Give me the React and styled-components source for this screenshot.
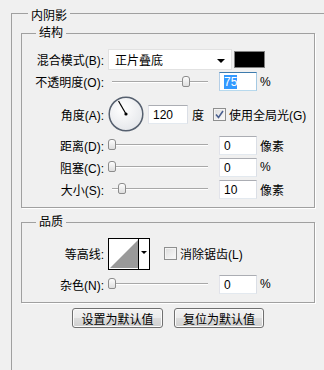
import styled, { createGlobalStyle } from 'styled-components';

const GlobalStyle = createGlobalStyle`
  body {
    margin: 0;
    background: #f0f0f0;
    font-family: "Liberation Sans", "Noto Sans CJK SC", sans-serif;
    font-size: 12px;
    color: #000;
  }
`;

const Page = styled.div`
  height: 370px;
  overflow: hidden;
  box-sizing: border-box;
  padding: 3px 0 0 11px;
`;

const Group = styled.fieldset`
  margin: 0;
  min-width: 0;
  box-sizing: border-box;
  border: 1px solid #a0a0a0;
  box-shadow: 1px 1px 0 #ffffff;
`;

const OuterGroup = styled(Group)`
  border-right: none;
  border-bottom: none;
  box-shadow: none;
  height: 400px;
  padding: 3px 0 0 9px;
`;

const InnerGroup = styled(Group)`
  width: 294px;
  padding: ${(p) => p.$top || 8}px 0 7px 0;
  margin-top: ${(p) => p.$mt || 0}px;
`;

const Legend = styled.legend`
  padding: ${(p) => (p.$drop ? '6px 3px 0' : '0 3px')};
  margin-left: ${(p) => p.$ml}px;
  line-height: 14px;
`;

const Row = styled.div`
  display: flex;
  align-items: center;
  height: ${(p) => p.$h || 22}px;
  margin-top: ${(p) => p.$mt || 0}px;
`;

const Label = styled.span`
  flex-shrink: 0;
  width: 82px;
  margin-right: 4px;
  text-align: right;
  white-space: nowrap;
`;

const Select = styled.div`
  display: flex;
  align-items: center;
  justify-content: space-between;
  box-sizing: border-box;
  width: 124px;
  height: 21px;
  padding: 0 6px 0 6px;
  background: #ffffff;
  border: 1px solid #e2e2e2;
  &::after {
    content: '';
    border-left: 4px solid transparent;
    border-right: 4px solid transparent;
    border-top: 4px solid #000;
    margin-top: 2px;
  }
`;

const Swatch = styled.div`
  width: 31px;
  height: 17px;
  margin-left: 2px;
  box-sizing: border-box;
  background: #000;
  border: 1px solid #808080;
`;

const Slider = styled.div`
  position: relative;
  flex-shrink: 0;
  width: 104px;
  height: 14px;
  margin-right: 7px;
  &::before {
    content: '';
    position: absolute;
    left: 4px;
    right: 4px;
    top: 6px;
    height: 1px;
    background: #a8a8a8;
    border-bottom: 1px solid #ffffff;
  }
`;

const Thumb = styled.div`
  position: absolute;
  top: 1px;
  width: 8px;
  height: 11px;
  margin-left: -4px;
  box-sizing: border-box;
  border: 1px solid #8c8c8c;
  border-radius: 3px 3px 2px 2px;
  background: linear-gradient(#fdfdfd, #dedede);
`;

const Field = styled.div`
  flex-shrink: 0;
  box-sizing: border-box;
  width: ${(p) => p.$w || 38}px;
  height: 19px;
  margin-left: ${(p) => p.$ml || 0}px;
  padding: 1px 4px 0;
  line-height: 16px;
  background: #ffffff;
  border: 1px solid;
  border-color: ${(p) =>
    p.$focus ? '#3d7bad #a4c9e3 #b7d9ed #b5cfe7' : '#abadb3 #dbdfe6 #e3e9ef #e2e3ea'};
`;

const Selected = styled.span`
  background: #3399ff;
  color: #ffffff;
`;

const Unit = styled.span`
  margin-left: ${(p) => p.$ml || 3}px;
  white-space: nowrap;
`;

const Check = styled.label`
  display: flex;
  align-items: center;
  gap: 3px;
  margin-left: ${(p) => p.$ml}px;
  white-space: nowrap;
`;

const CheckBox = styled.span`
  display: flex;
  align-items: center;
  justify-content: center;
  width: 13px;
  height: 13px;
  box-sizing: border-box;
  border: 1px solid #8e8f8f;
  background: linear-gradient(135deg, #dcdcdc, #fbfbfb);
  box-shadow: inset 0 0 0 1px #f4f4f4;
`;

const Buttons = styled.div`
  display: flex;
  justify-content: center;
  gap: 11px;
  width: 294px;
  margin-top: 5px;
`;

const Button = styled.button`
  box-sizing: border-box;
  width: ${(p) => p.$w}px;
  height: 20px;
  padding: 0;
  font: inherit;
  color: #000;
  border: 1px solid #707070;
  border-radius: 3px;
  background: linear-gradient(#f2f2f2 0%, #ebebeb 50%, #dddddd 51%, #cfcfcf 100%);
  box-shadow: inset 0 0 0 1px #fbfbfb;
`;

function Range({ pos }) {
  return (
    <Slider>
      <Thumb style={{ left: 4 + pos * 96 }} />
    </Slider>
  );
}

function Dial({ angle }) {
  const r = (angle * Math.PI) / 180;
  const x = 18 + Math.cos(r) * 15;
  const y = 18 - Math.sin(r) * 15;
  return (
    <svg width="36" height="36" viewBox="0 0 36 36">
      <defs>
        <radialGradient id="dialFill" cx="0.4" cy="0.35" r="0.7">
          <stop offset="0" stopColor="#ffffff" />
          <stop offset="1" stopColor="#e4e6ea" />
        </radialGradient>
      </defs>
      <circle cx="18" cy="18" r="16.8" fill="url(#dialFill)" stroke="#56606f" strokeWidth="1.5" />
      <line x1="18" y1="18" x2={x} y2={y} stroke="#000" strokeWidth="1.2" />
      <circle cx="18" cy="18" r="1.6" fill="#000" />
    </svg>
  );
}

function Contour() {
  return (
    <svg width="42" height="32" viewBox="0 0 42 32">
      <rect x="0.5" y="0.5" width="41" height="31" fill="#fff" stroke="#000" />
      <polygon points="2,30 30,2 30,30" fill="#9a9a9a" />
      <line x1="30.5" y1="1" x2="30.5" y2="31" stroke="#000" />
      <polygon points="33,13 39,13 36,16" fill="#000" />
    </svg>
  );
}

function Tick({ checked }) {
  return (
    <CheckBox>
      {checked && (
        <svg width="9" height="9" viewBox="0 0 9 9">
          <path d="M1 4.5 L3.5 7.5 L8 1" fill="none" stroke="#4a5f8f" strokeWidth="1.6" />
        </svg>
      )}
    </CheckBox>
  );
}

export default function App() {
  return (
    <>
      <GlobalStyle />
      <Page>
        <OuterGroup>
          <Legend $drop $ml={7}>内阴影</Legend>
          <InnerGroup>
            <Legend $ml={14}>结构</Legend>
            <Row $h={23}>
              <Label>混合模式(B):</Label>
              <Select>正片叠底</Select>
              <Swatch />
            </Row>
            <Row $h={21}>
              <Label>不透明度(O):</Label>
              <Range pos={0.77} />
              <Field $focus>
                <Selected>75</Selected>
              </Field>
              <Unit>%</Unit>
            </Row>
            <Row $h={40} $mt={2}>
              <Label>角度(A):</Label>
              <Dial angle={120} />
              <Field $w={40} $ml={4}>120</Field>
              <Unit $ml={4}>度</Unit>
              <Check $ml={9}>
                <Tick checked />
                使用全局光(G)
              </Check>
            </Row>
            <Row>
              <Label>距离(D):</Label>
              <Range pos={0} />
              <Field>0</Field>
              <Unit>像素</Unit>
            </Row>
            <Row>
              <Label>阻塞(C):</Label>
              <Range pos={0} />
              <Field>0</Field>
              <Unit>%</Unit>
            </Row>
            <Row>
              <Label>大小(S):</Label>
              <Range pos={0.104} />
              <Field>10</Field>
              <Unit>像素</Unit>
            </Row>
          </InnerGroup>
          <InnerGroup $mt={7}>
            <Legend $ml={14}>品质</Legend>
            <Row $h={33}>
              <Label>等高线:</Label>
              <Contour />
              <Check $ml={14}>
                <Tick />
                消除锯齿(L)
              </Check>
            </Row>
            <Row $mt={3}>
              <Label>杂色(N):</Label>
              <Range pos={0} />
              <Field>0</Field>
              <Unit>%</Unit>
            </Row>
          </InnerGroup>
          <Buttons>
            <Button $w={91}>设置为默认值</Button>
            <Button $w={90}>复位为默认值</Button>
          </Buttons>
        </OuterGroup>
      </Page>
    </>
  );
}
